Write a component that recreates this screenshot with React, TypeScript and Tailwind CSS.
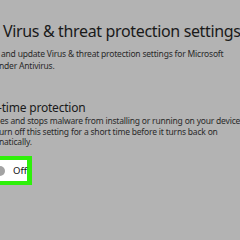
export default function App() {
  return (
    <div className="w-[240px] h-[240px] overflow-hidden bg-[#b3b3b3] text-[#1c1c1c]" style={{ fontFamily: '"Noto Sans", "Open Sans", sans-serif' }}>
      <div className="pt-[20px] pl-[3px] text-[16px] leading-[22px] tracking-[-0.35px] whitespace-nowrap text-[#1a1a1a]">
        Virus &amp; threat protection settings
      </div>
      <div className="mt-[6px] pl-[1px] text-[8.5px] leading-[12px] tracking-[-0.2px] whitespace-nowrap text-[#2a2a2a]">
        <div>and update Virus &amp; threat protection settings for Microsoft</div>
        <div className="-ml-[2px]">nder Antivirus.</div>
      </div>
      <div className="mt-[28px] -ml-[2px] text-[12px] leading-[16px] tracking-[-0.2px] whitespace-nowrap text-[#1a1a1a]">
        -time protection
      </div>
      <div className="text-[8.5px] leading-[10.7px] tracking-[-0.2px] whitespace-nowrap text-[#2a2a2a]">
        <div>es and stops malware from installing or running on your device</div>
        <div className="-ml-[1px]">urn off this setting for a short time before it turns back on</div>
        <div className="-ml-[1px]">natically.</div>
      </div>
      <div className="mt-[8px] w-[32px] h-[29px] border-y-[4px] border-r-[5px] border-[#2ef00a] bg-white flex items-center">
        <div className="-ml-[5px] w-[10px] h-[10px] rounded-full bg-[#a3a3a3]" />
        <span className="ml-[8px] text-[9.5px] leading-[10px] text-[#111]">Off</span>
      </div>
    </div>
  );
}
